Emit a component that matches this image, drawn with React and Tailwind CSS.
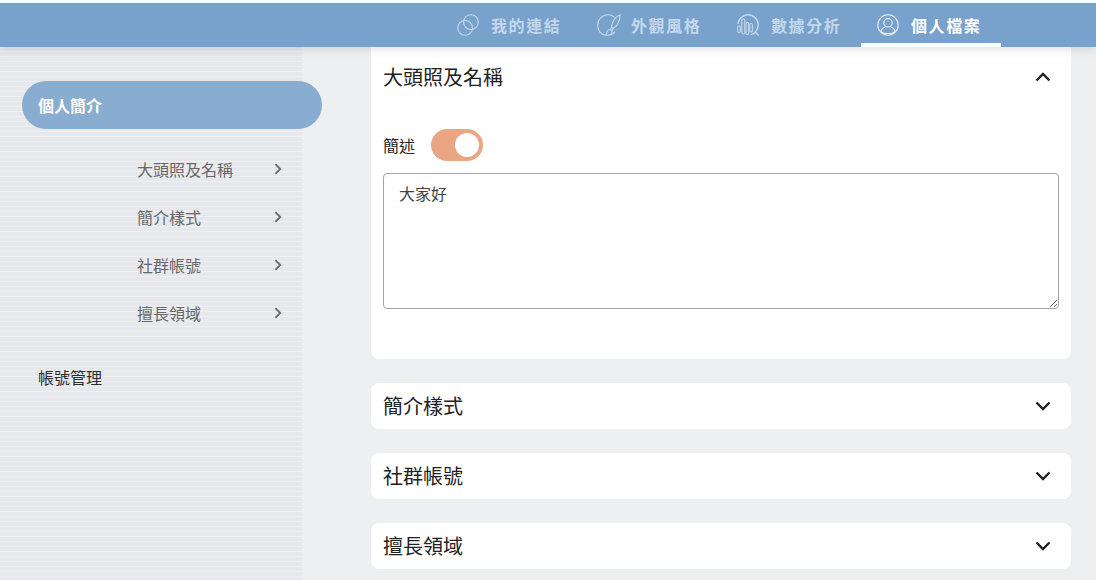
import { useState } from 'react';

const LinkIcon = () => (
  <svg viewBox="0 0 22 22" className="size-[22px]" fill="none" stroke="currentColor" strokeWidth="1.1" aria-hidden="true">
    <circle cx="13.9" cy="8.1" r="7.4" />
    <circle cx="8.1" cy="13.9" r="7.4" />
  </svg>
);

const StyleIcon = () => (
  <svg viewBox="0 0 24 22" className="h-[22px] w-6" fill="none" stroke="currentColor" strokeWidth="1.1" strokeLinecap="round" strokeLinejoin="round" aria-hidden="true">
    <path d="M17.2 3.1C15.4 1.5 13.4.8 11 .8 5.2.8.7 5.4.7 11c0 5.4 3.2 9.4 7.6 10.2 4 .5 7.4-.9 9.4-3.4" />
    <path d="M8.3 21.2c1.6-1 1.4-2.6 2-4 .8-1.6 2.9-1.9 4.1-.6 1.3 1.4.7 3.4-1.4 3.9" />
    <path d="M23.4.8c-3.4 1.2-6 4-7.5 7.2-.8 1.8-1.5 3.6-1.3 5.3l1.7 1c1.800-.7 3.200-2.200 4.200-4C22 7.500 23.100 4.300 23.400.8zM14.600 13.300l-.8 2.300M16.300 14.300l-1.300 2" />
  </svg>
);

const AnalysisIcon = () => (
  <svg viewBox="0 0 22 22" className="size-[22px]" fill="none" stroke="currentColor" strokeWidth="1.1" strokeLinecap="round" strokeLinejoin="round" aria-hidden="true">
    <path d="M1.1 9.5A10.1 10.1 0 1 1 18.2 18.2C17 19.3 15.7 20.2 14.2 20.6M18.2 18.2l3 2.8" strokeWidth="1.5" />
    <rect x=".7" y="12" width="2.6" height="6.5" rx="1.2" />
    <rect x="4.8" y="5" width="3" height="15" rx="1.4" />
    <rect x="9" y="8.5" width="2.6" height="12" rx="1.2" />
    <rect x="12.8" y="9.5" width="2.6" height="8.5" rx="1.2" />
  </svg>
);

const ProfileIcon = () => (
  <svg viewBox="0 0 22 22" className="size-[22px] text-[#e6f0f9]" fill="none" stroke="currentColor" strokeWidth="1.1" aria-hidden="true">
    <circle cx="11" cy="11" r="10.2" />
    <circle cx="11" cy="8.8" r="4.2" />
    <path d="M3.8 17.8c.5-2.6 2.2-4 4.4-4.6M18.2 17.8c-.5-2.6-2.2-4-4.4-4.6M3.8 17.8c2 1.6 4.4 2 7.2 2s5.2-.4 7.2-2" />
  </svg>
);

const Chevron = ({ className }) => (
  <svg viewBox="0 0 16 16" className={className} fill="none" stroke="currentColor" strokeWidth="2.4" aria-hidden="true">
    <path d="M1.5 4.500 8 11 14.500 4.500" />
  </svg>
);

const tabs = [
  { label: '我的連結', Icon: LinkIcon },
  { label: '外觀風格', Icon: StyleIcon },
  { label: '數據分析', Icon: AnalysisIcon },
  { label: '個人檔案', Icon: ProfileIcon, active: true },
];

const sections = ['大頭照及名稱', '簡介樣式', '社群帳號', '擅長領域'];

const Header = () => (
  <header className="relative z-10 border-t-3 border-[#f3fafe] bg-[#78a2cc] shadow-[0_2px_10px_rgba(0,0,0,0.12)]">
    <nav className="flex justify-end pr-[95px]">
      {tabs.map(({ label, Icon, active }) => (
        <a
          key={label}
          href="#"
          aria-current={active ? 'page' : undefined}
          className={`flex h-11 w-[140px] items-center border-b-4 pt-1 pl-4 font-bold tracking-widest ${
            active ? 'border-white text-white' : 'border-transparent text-[#c3d8ec]'
          }`}
        >
          <span className="flex w-[34px]">
            <Icon />
          </span>
          {label}
        </a>
      ))}
    </nav>
  </header>
);

const Sidebar = () => (
  <aside className="w-[302px] shrink-0 bg-[repeating-linear-gradient(to_bottom,#e7e8eb_0px,#e7e8eb_4px,#eeeff2_4px,#eeeff2_5px)] pt-[34px]">
    <a href="#" className="-mr-5 ml-[22px] flex h-12 items-center rounded-full bg-[#89add1] px-4 font-bold text-white">
      個人簡介
    </a>
    <ul className="mt-4">
      {sections.map((name) => (
        <li key={name}>
          <a href="#" className="flex h-12 items-center justify-between pr-[18px] pl-[137px] text-[#67686a]">
            {name}
            <Chevron className="size-3 -rotate-90" />
          </a>
        </li>
      ))}
    </ul>
    <a href="#" className="mt-4 ml-[22px] flex h-12 items-center px-4 text-[#2b2b2c]">
      帳號管理
    </a>
  </aside>
);

const ProfileCard = () => {
  const [showBio, setShowBio] = useState(true);

  return (
    <section className="rounded-b-lg bg-white px-3 pt-[7px] pb-[50px]">
      <h2>
        <button type="button" aria-expanded="true" className="flex h-[46px] w-full items-center justify-between pr-2 text-xl">
          {sections[0]}
          <Chevron className="size-4 rotate-180" />
        </button>
      </h2>
      <div className="mt-[29px] flex items-center gap-4">
        <label htmlFor="bio-switch">簡述</label>
        <input
          id="bio-switch"
          type="checkbox"
          role="switch"
          checked={showBio}
          onChange={(e) => setShowBio(e.target.checked)}
          className="flex h-8 w-[52px] appearance-none items-center rounded-full bg-gray-300 px-1 before:size-6 before:rounded-full before:bg-white checked:justify-end checked:bg-[#eaa583]"
        />
      </div>
      <textarea
        aria-label="簡述內容"
        defaultValue="大家好"
        className="mt-3 block h-[136px] w-full resize rounded-sm border border-[#a3a3a3] bg-white px-[15px] py-[7px] text-[#444]"
      />
    </section>
  );
};

const App = () => (
  <div className="flex min-h-screen flex-col bg-[#eeeff1] font-['Noto_Sans_CJK_TC',sans-serif] text-base text-[#212121]">
    <Header />
    <div className="flex flex-1">
      <Sidebar />
      <main className="flex flex-1 flex-col gap-6 pr-[25px] pb-[11px] pl-[69px]">
        <ProfileCard />
        {sections.slice(1).map((name) => (
          <section key={name} className="rounded-lg bg-white px-3">
            <h2>
              <button type="button" aria-expanded="false" className="flex h-[46px] w-full items-center justify-between pr-2 text-xl">
                {name}
                <Chevron className="size-4" />
              </button>
            </h2>
          </section>
        ))}
      </main>
    </div>
  </div>
);

export default App;
